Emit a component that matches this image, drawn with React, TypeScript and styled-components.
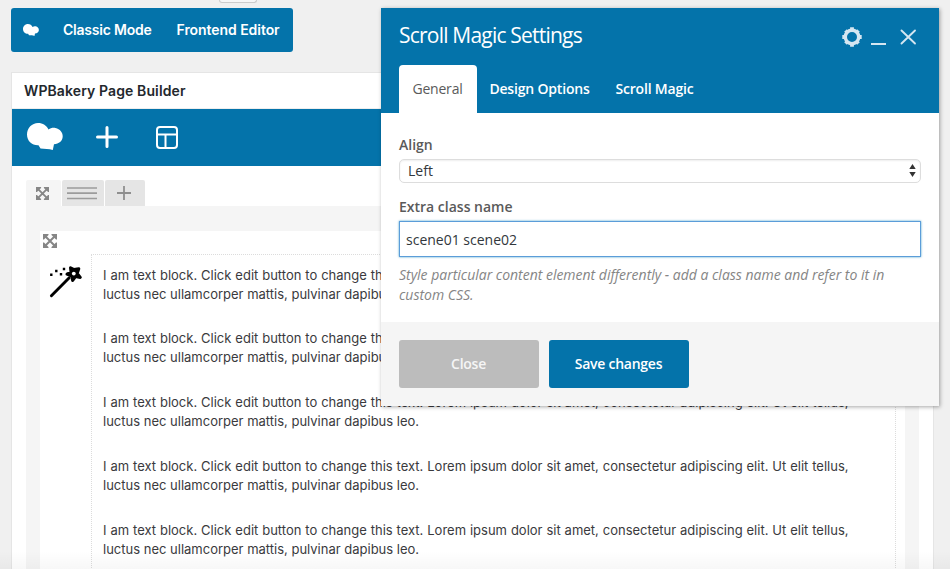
import React from "react";
import styled, { createGlobalStyle } from "styled-components";

const BLUE = "#0473aa";

const GlobalStyle = createGlobalStyle`
  * { box-sizing: border-box; }
  html, body { margin: 0; padding: 0; }
  body { background: #f0f0f0; overflow: hidden; }
  svg { display: block; flex: none; }
`;

const Page = styled.div`
  position: relative;
  width: 950px;
  height: 569px;
  overflow: hidden;
  padding-left: 11px;
  background: #f0f0f0;
  font-family: Inter, Roboto, "Liberation Sans", sans-serif;
  color: #3a3a3d;
`;

const PermalinkEdge = styled.div`
  width: 38px;
  height: 3px;
  margin-left: 208px;
  border: 1px solid #ccc;
  border-top: 0;
  border-radius: 0 0 3px 3px;
  background: #f7f7f7;
`;

const ModeSwitch = styled.nav`
  display: flex;
  align-items: center;
  width: 282px;
  height: 44px;
  margin-top: 5px;
  padding-left: 12px;
  border-radius: 3px;
  background: ${BLUE};
`;

const ModeLink = styled.a<{ $gap: number; $track: number }>`
  margin-left: ${(p) => p.$gap}px;
  color: #fff;
  font-size: 14px;
  font-weight: 600;
  line-height: 20px;
  letter-spacing: ${(p) => p.$track}px;
  white-space: nowrap;
`;

const PostBox = styled.section`
  width: 923px;
  height: 520px;
  margin-top: 20px;
  border: 1px solid #e5e5e5;
  background: #fff;
`;

const PostBoxTitle = styled.h2`
  height: 36px;
  margin: 0;
  padding-left: 12px;
  border-bottom: 1px solid #eee;
  color: #23282d;
  font-size: 14px;
  font-weight: 600;
  line-height: 35px;
  letter-spacing: 0.11px;
`;

const BuilderBar = styled.div`
  display: flex;
  align-items: center;
  height: 57px;
  padding: 0 0 2px 15px;
  background: ${BLUE};
`;

const BarIcon = styled.span<{ $gap?: number }>`
  margin-left: ${(p) => p.$gap ?? 0}px;
  padding-top: 1px;
`;

const RowTabs = styled.div`
  display: flex;
  gap: 1px;
  margin: 14px 0 0 14px;
`;

const RowTab = styled.button<{ $width: number; $active?: boolean }>`
  display: flex;
  align-items: center;
  justify-content: center;
  width: ${(p) => p.$width}px;
  height: 26px;
  padding: 0 2px 0 0;
  border: 0;
  border-radius: 2px 2px 0 0;
  background: ${(p) => (p.$active ? "#f5f5f5" : "#e5e5e5")};
`;

const RowArea = styled.div`
  width: 893px;
  height: 400px;
  margin-left: 14px;
  padding: 25px 14px 0;
  background: #f5f5f5;
`;

const Column = styled.div`
  height: 375px;
  background: #fff;
`;

const ColumnControls = styled.div`
  height: 23px;
  padding: 3px 0 0 3px;
`;

const ColumnBody = styled.div`
  display: flex;
`;

const ElementIcon = styled.div`
  width: 51px;
  padding: 10px 0 0 9px;
`;

const TextElement = styled.div`
  width: 805px;
  height: 352px;
  padding: 10.6px 0 0 11px;
  border: 1px dotted #dcdcdc;
`;

const Paragraph = styled.p`
  margin: 0 0 25.8px;
  font-size: 13px;
  line-height: 19px;
  white-space: pre;
`;

const ParagraphLine = styled.span<{ $spread: number }>`
  display: block;
  word-spacing: ${(p) => p.$spread}px;
`;

const BottomFade = styled.div`
  position: absolute;
  left: 0;
  right: 0;
  bottom: 0;
  height: 18px;
  background: linear-gradient(rgba(0, 0, 0, 0), rgba(0, 0, 0, 0.03));
`;

const Dialog = styled.div`
  position: absolute;
  left: 381px;
  top: 8px;
  width: 558px;
  height: 398px;
  background: #fff;
  box-shadow: 1px 1px 4px rgba(0, 0, 0, 0.35);
  font-family: "Open Sans", "Noto Sans", sans-serif;
`;

const DialogHeader = styled.header`
  display: flex;
  flex-direction: column;
  justify-content: space-between;
  height: 105px;
  padding-left: 18px;
  background: ${BLUE};
`;

const TitleRow = styled.div`
  display: flex;
  justify-content: space-between;
  padding: 13px 19px 0 0;
`;

const Title = styled.h3`
  margin: 0;
  color: #fff;
  font-size: 21px;
  font-weight: 400;
  line-height: 29px;
  letter-spacing: -0.79px;
`;

const WindowControls = styled.div`
  display: flex;
  padding-top: 6px;
`;

const Tabs = styled.div`
  display: flex;
  height: 48px;
`;

const Tab = styled.button<{ $active?: boolean; $width: number; $track: number }>`
  width: ${(p) => p.$width}px;
  padding: 0 1px 0 0;
  border: 0;
  border-radius: 4px 4px 0 0;
  background: ${(p) => (p.$active ? "#fff" : "transparent")};
  color: ${(p) => (p.$active ? "#5a5a5a" : "#fff")};
  font: ${(p) => (p.$active ? 400 : 600)} 14px/20px "Open Sans", sans-serif;
  letter-spacing: ${(p) => p.$track}px;
  white-space: nowrap;
`;

const Form = styled.div`
  height: 209px;
  padding: 22px 18px 0;
`;

const Label = styled.label<{ $top?: number }>`
  display: block;
  margin-top: ${(p) => p.$top ?? 0}px;
  color: #5a5a5a;
  font-size: 14px;
  font-weight: 600;
  line-height: 20px;
`;

const SelectBox = styled.div`
  display: flex;
  align-items: center;
  justify-content: space-between;
  width: 522px;
  height: 24px;
  margin-top: 4px;
  padding: 0 4px 1px 8px;
  border: 1px solid #ddd;
  border-radius: 5px;
  background: #fff;
  box-shadow: inset 0 1px 2px rgba(0, 0, 0, 0.07);
  color: #32373c;
  font-size: 14px;
`;

const TextField = styled.input`
  display: block;
  width: 522px;
  height: 36px;
  margin-top: 4px;
  padding: 0 6px;
  border: 1px solid #5b9dd9;
  border-radius: 0;
  outline: 0;
  background: #fff;
  box-shadow: 0 0 2px rgba(30, 140, 190, 0.8);
  color: #32373c;
  font: 400 14px/20px "Open Sans", sans-serif;
`;

const Hint = styled.p`
  margin: 8px 0 0;
  color: #858585;
  font-size: 14px;
  font-style: italic;
  line-height: 20px;
  letter-spacing: -0.01px;
  white-space: pre;
`;

const DialogFooter = styled.footer`
  display: flex;
  gap: 10px;
  height: 84px;
  padding: 18px;
  background: #f5f5f5;
`;

const ActionButton = styled.button<{ $primary?: boolean }>`
  width: 140px;
  height: 48px;
  padding: 0 1px 0 0;
  border: 0;
  border-radius: 3px;
  background: ${(p) => (p.$primary ? BLUE : "#bcbcbc")};
  color: ${(p) => (p.$primary ? "#fff" : "#f5f5f5")};
  font: 600 14px/20px "Open Sans", sans-serif;
  letter-spacing: -0.25px;
`;

const CloudLogo = ({ width, height }: { width: number; height: number }) => (
  <svg width={width} height={height} viewBox="0 0 36 27" fill="#fff">
    <path d="M11 0C16 0 19.500 2.500 21.500 6.500C23.500 5 26 4.500 28.500 5C33 6 36 9.500 35.700 13.800C35.400 18 32 21 27 21.300L25.800 27C22 25.500 17.500 26 13.500 25.500L11.500 22.200C5 22.500 0 18 0 11.500C0 5 5 0 11 0Z" />
  </svg>
);

const ExpandIcon = ({ size }: { size: number }) => (
  <svg width={size} height={size} viewBox="0 0 14 14" fill="#868686">
    <path d="M0 0h5.500v1L4.300 2.200 2.200 4.300 1 5.500H0ZM14 0v5.500h-1L8.500 1V0ZM14 14H8.500v-1L13 8.500h1ZM0 14V8.500h1L5.500 13v1Z" />
    <path d="M2 2l10 10M12 2 2 12" stroke="#868686" strokeWidth="2" />
  </svg>
);

const WandIcon = () => (
  <svg width="35" height="35" viewBox="0 0 35 35">
    <path d="M2.400 31.800 20 14" stroke="#000" strokeWidth="2.900" strokeLinecap="round" />
    <path
      d="M21.500 3.700 25 5.600 29.800 4.800 28.200 9.400 31.300 13.400 26.500 12.600 23.700 16.500 22.500 12 18 10.200 22 8.200Z"
      fill="#000"
      stroke="#000"
      strokeWidth="3"
      strokeLinejoin="round"
    />
    <circle cx="24.800" cy="9.600" r="1.900" fill="#fff" />
    <path d="M1.100 9.500h2.400v2.400H1.100zM6.100 5.800h2.400v2.400H6.100zM10.800 9.100h2.400v2.400h-2.400zM13.800 3.800h2.400v2.400h-2.400z" />
  </svg>
);

const GearIcon = () => (
  <svg width="20" height="20" viewBox="0 0 20 20" stroke="#d5e6f1" fill="none">
    <circle cx="10" cy="10" r="6.700" strokeWidth="3.400" />
    <path
      d="M10 .3v2.500M10 17.200v2.500M.3 10h2.500M17.200 10h2.500M3.500 3.500l1.500 1.500M15 15l1.500 1.500M16.500 3.500 15 5M5 15l-1.500 1.500"
      strokeWidth="3.800"
    />
  </svg>
);

const PARAGRAPH_START =
  "I am text block. Click edit button to change this text. Lorem ipsum dolor sit amet, consectetur adipiscing elit. Ut elit tellus,";
const PARAGRAPH_END = "luctus nec ullamcorper mattis, pulvinar dapibus leo.";

export default function App() {
  return (
    <Page>
      <GlobalStyle />
      <PermalinkEdge />
      <ModeSwitch>
        <CloudLogo width={16} height={12} />
        <ModeLink $gap={24} $track={-0.22}>Classic Mode</ModeLink>
        <ModeLink $gap={25} $track={-0.06}>Frontend Editor</ModeLink>
      </ModeSwitch>
      <PostBox>
        <PostBoxTitle>WPBakery Page Builder</PostBoxTitle>
        <BuilderBar>
          <CloudLogo width={36} height={27} />
          <BarIcon $gap={33}>
            <svg width="22" height="22" viewBox="0 0 22 22" stroke="#fff" strokeWidth="3" strokeLinecap="round">
              <path d="M11 1.500v19M1.500 11h19" />
            </svg>
          </BarIcon>
          <BarIcon $gap={38}>
            <svg width="22" height="23" viewBox="0 0 22 23" fill="none" stroke="#fff" strokeWidth="2">
              <rect x="1" y="1" width="20" height="21" rx="3" />
              <path d="M1 8.500h20M9.500 8.500V22" />
            </svg>
          </BarIcon>
        </BuilderBar>
        <RowTabs>
          <RowTab $width={35} $active>
            <ExpandIcon size={13} />
          </RowTab>
          <RowTab $width={42}>
            <svg width="30" height="14" viewBox="0 0 30 14" stroke="#9c9c9c" strokeWidth="1.700">
              <path d="M0 2h30M0 7.200h30M0 12.500h30" />
            </svg>
          </RowTab>
          <RowTab $width={40}>
            <svg width="14" height="14" viewBox="0 0 14 14" stroke="#8f8f8f" strokeWidth="1.800">
              <path d="M7 0v14M0 7h14" />
            </svg>
          </RowTab>
        </RowTabs>
        <RowArea>
          <Column>
            <ColumnControls>
              <ExpandIcon size={14} />
            </ColumnControls>
            <ColumnBody>
              <ElementIcon>
                <WandIcon />
              </ElementIcon>
              <TextElement>
                {[0, 1, 2, 3, 4].map((n) => (
                  <Paragraph key={n}>
                    <ParagraphLine $spread={0.26}>{PARAGRAPH_START}</ParagraphLine>
                    <ParagraphLine $spread={0}>{PARAGRAPH_END}</ParagraphLine>
                  </Paragraph>
                ))}
              </TextElement>
            </ColumnBody>
          </Column>
        </RowArea>
      </PostBox>
      <BottomFade />
      <Dialog>
        <DialogHeader>
          <TitleRow>
            <Title>Scroll Magic Settings</Title>
            <WindowControls>
              <GearIcon />
              <svg width="58" height="20" viewBox="0 0 58 20" stroke="#d5e6f1" fill="none">
                <path d="M9 17h15" strokeWidth="2" />
                <path d="M39.500 3.500l13.500 13M53 3.500 39.500 16.500" strokeWidth="1.900" strokeLinecap="round" />
              </svg>
            </WindowControls>
          </TitleRow>
          <Tabs>
            <Tab $active $width={78} $track={-0.2}>General</Tab>
            <Tab $width={126} $track={-0.18}>Design Options</Tab>
            <Tab $width={104} $track={-0.2}>Scroll Magic</Tab>
          </Tabs>
        </DialogHeader>
        <Form>
          <Label>Align</Label>
          <SelectBox>
            Left
            <svg width="7" height="13" viewBox="0 0 7 13" fill="#333">
              <path d="M3.500 0 6.700 5H.3ZM3.500 13 6.700 8H.3Z" />
            </svg>
          </SelectBox>
          <Label $top={14}>Extra class name</Label>
          <TextField defaultValue="scene01 scene02" />
          <Hint>{"Style particular content element differently - add a class name and refer to it in\ncustom CSS."}</Hint>
        </Form>
        <DialogFooter>
          <ActionButton>Close</ActionButton>
          <ActionButton $primary>Save changes</ActionButton>
        </DialogFooter>
      </Dialog>
    </Page>
  );
}
